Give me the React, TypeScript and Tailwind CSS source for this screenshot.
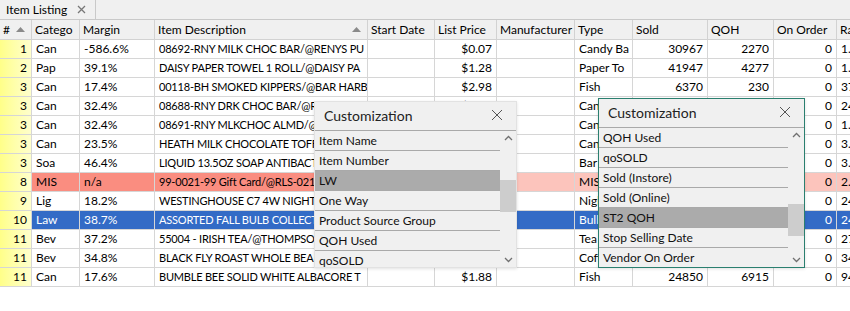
import React from 'react';

type Col = { label: string; w: number; right?: boolean; sort?: boolean; tight?: boolean };

const cols: Col[] = [
  { label: '#', w: 32, right: true, sort: true },
  { label: 'Catego', w: 48 },
  { label: 'Margin', w: 75 },
  { label: 'Item Description', w: 213, sort: true, tight: true },
  { label: 'Start Date', w: 67 },
  { label: 'List Price', w: 62, right: true },
  { label: 'Manufacturer', w: 78 },
  { label: 'Type', w: 58 },
  { label: 'Sold', w: 75, right: true },
  { label: 'QOH', w: 66, right: true },
  { label: 'On Order', w: 63, right: true },
  { label: 'Rank', w: 40 },
];

const rows: string[][] = [
  ['1', 'Can', '-586.6%', '08692-RNY MILK CHOC BAR/@RENYS PU', '', '$0.07', '', 'Candy Ba', '30967', '2270', '0', '1.25'],
  ['2', 'Pap', '39.1%', 'DAISY PAPER TOWEL 1 ROLL/@DAISY PA', '', '$1.28', '', 'Paper To', '41947', '4277', '0', '1.10'],
  ['3', 'Can', '17.4%', '00118-BH SMOKED KIPPERS/@BAR HARB', '', '$2.98', '', 'Fish', '6370', '230', '0', '37.2'],
  ['3', 'Can', '32.4%', '08688-RNY DRK CHOC BAR/@RENYS PU', '', '$0.07', '', 'Candy Ba', '20113', '1840', '0', '24.1'],
  ['3', 'Can', '32.4%', '08691-RNY MLKCHOC ALMD/@RENYS PU', '', '$0.07', '', 'Candy Ba', '19845', '1622', '0', '1.30'],
  ['3', 'Can', '23.5%', 'HEATH MILK CHOCOLATE TOFFEE BAR', '', '$0.99', '', 'Candy Ba', '15230', '980', '0', '3.40'],
  ['3', 'Soa', '46.4%', 'LIQUID 13.5OZ SOAP ANTIBACTERIAL', '', '$1.49', '', 'Bar Soap', '12004', '760', '0', '3.15'],
  ['8', 'MIS', 'n/a', '99-0021-99 Gift Card/@RLS-0210', '', '', '', 'MISC', '9870', '0', '0', '2.00'],
  ['9', 'Lig', '18.2%', 'WESTINGHOUSE C7 4W NIGHT LIGHT', '', '$2.49', '', 'Night Li', '8120', '512', '0', '24.6'],
  ['10', 'Law', '38.7%', 'ASSORTED FALL BULB COLLECTION', '', '$4.99', '', 'Bulbs', '7711', '420', '0', '24.0'],
  ['11', 'Bev', '37.2%', '55004 - IRISH TEA/@THOMPSONS', '', '$3.49', '', 'Tea', '6550', '380', '0', '27.3'],
  ['11', 'Bev', '34.8%', 'BLACK FLY ROAST WHOLE BEAN', '', '$8.99', '', 'Coffee', '6020', '310', '0', '34.2'],
  ['11', 'Can', '17.6%', 'BUMBLE BEE SOLID WHITE ALBACORE T', '', '$1.88', '', 'Fish', '24850', '6915', '0', '94.1'],
];

const font = { fontFamily: 'Lato, "Open Sans", sans-serif' };

function SortArrow() {
  return (
    <svg width="9" height="5" viewBox="0 0 9 5" className="shrink-0">
      <polygon points="0,5 4.5,0 9,5" fill="#8a8a8a" />
    </svg>
  );
}

function cellBg(ri: number, ci: number) {
  if (ci === 0) return 'bg-gradient-to-r from-[#ffff88] to-[#ffffcc]';
  if (ri === 9) return 'bg-[#336bc6] text-white';
  if (ri === 7) return ci <= 5 ? 'bg-[#fa8d80]' : 'bg-[#fcc4bc]';
  return 'bg-white';
}

function Chevron({ up }: { up?: boolean }) {
  return (
    <svg width="9" height="6" viewBox="0 0 9 6">
      <polyline
        points={up ? '1,5 4.5,1.5 8,5' : '1,1 4.5,4.5 8,1'}
        fill="none"
        stroke="#707070"
        strokeWidth="1.3"
      />
    </svg>
  );
}

function Customization({
  items,
  selected,
  thumbTop,
  className,
}: {
  items: string[];
  selected: number;
  thumbTop: number;
  className: string;
}) {
  return (
    <div className={`absolute flex flex-col bg-[#f0f0f0] ${className}`}>
      <div className="h-[29px] shrink-0 flex items-center justify-between pl-[9px] pr-[13px] pb-[2px] border-b border-[#a9a9a9]">
        <span className="text-[14px] text-[#222]">Customization</span>
        <svg width="12" height="12" viewBox="0 0 12 12">
          <path d="M1 1 L11 11 M11 1 L1 11" stroke="#555" strokeWidth="1" fill="none" />
        </svg>
      </div>
      <div className="flex flex-1 min-h-0">
        <div className="flex-1 overflow-hidden">
          {items.map((it, i) => (
            <div
              key={it}
              className={`h-[20px] leading-[19px] pl-[4px] text-[12px] text-[#111] border-b border-[#a9a9a9] whitespace-nowrap ${
                i === selected ? 'bg-[#ababab]' : ''
              }`}
            >
              {it}
            </div>
          ))}
        </div>
        <div className="w-[16px] shrink-0 relative bg-[#f0f0f0]">
          <div className="absolute top-[4px] left-[4px]">
            <Chevron up />
          </div>
          <div className="absolute left-0 right-0 h-[32px] bg-[#cdcdcd]" style={{ top: thumbTop }} />
          <div className="absolute bottom-[4px] left-[4px]">
            <Chevron />
          </div>
        </div>
      </div>
    </div>
  );
}

export default function App() {
  return (
    <div className="relative w-[850px] h-[311px] overflow-hidden bg-white text-black" style={font}>
      {/* tab strip */}
      <div className="h-[20px] flex bg-[#f0f0f0] border-b border-[#c9c9c9]">
        <div className="flex items-center justify-between pl-[6px] pr-[9px] w-[96px] border-r border-[#c9c9c9] text-[12px] whitespace-nowrap">
          <span>Item Listing</span>
          <svg width="9" height="9" viewBox="0 0 9 9">
            <path d="M1 1 L8 8 M8 1 L1 8" stroke="#777" strokeWidth="1.3" fill="none" />
          </svg>
        </div>
      </div>

      {/* header */}
      <div className="flex h-[20px] bg-[#f0f0f0] text-[12px]">
        {cols.map((c) => (
          <div
            key={c.label}
            style={{ width: c.w }}
            className="shrink-0 flex items-center justify-between pl-[3px] pr-[6px] border-r border-b border-[#d2d2d2] whitespace-nowrap overflow-hidden"
          >
            <span>{c.label}</span>
            {c.sort && <SortArrow />}
          </div>
        ))}
      </div>

      {/* rows */}
      {rows.map((r, ri) => (
        <div key={ri} className="flex h-[19px] text-[12px]">
          {r.map((v, ci) => (
            <div
              key={ci}
              style={{ width: cols[ci].w }}
              className={`shrink-0 leading-[18px] px-[4px] border-r border-b border-[#d6d6d6] whitespace-nowrap overflow-hidden ${
                cols[ci].right ? 'text-right' : ''
              } ${cols[ci].tight ? 'text-[11px] tracking-[-0.2px]' : ''} ${cellBg(ri, ci)}`}
            >
              {v}
            </div>
          ))}
        </div>
      ))}

      <Customization
        className="left-[314px] top-[101px] w-[203px] h-[167px] border border-[#e2e2e2] shadow-[0_1px_3px_rgba(0,0,0,0.12)]"
        items={['Item Name', 'Item Number', 'LW', 'One Way', 'Product Source Group', 'QOH Used', 'qoSOLD']}
        selected={2}
        thumbTop={49}
      />
      <Customization
        className="left-[598px] top-[98px] w-[207px] h-[170px] border border-[#2a7f6f] shadow-[0_1px_3px_rgba(0,0,0,0.12)]"
        items={['QOH Used', 'qoSOLD', 'Sold (Instore)', 'Sold (Online)', 'ST2 QOH', 'Stop Selling Date', 'Vendor On Order']}
        selected={4}
        thumbTop={76}
      />
    </div>
  );
}
